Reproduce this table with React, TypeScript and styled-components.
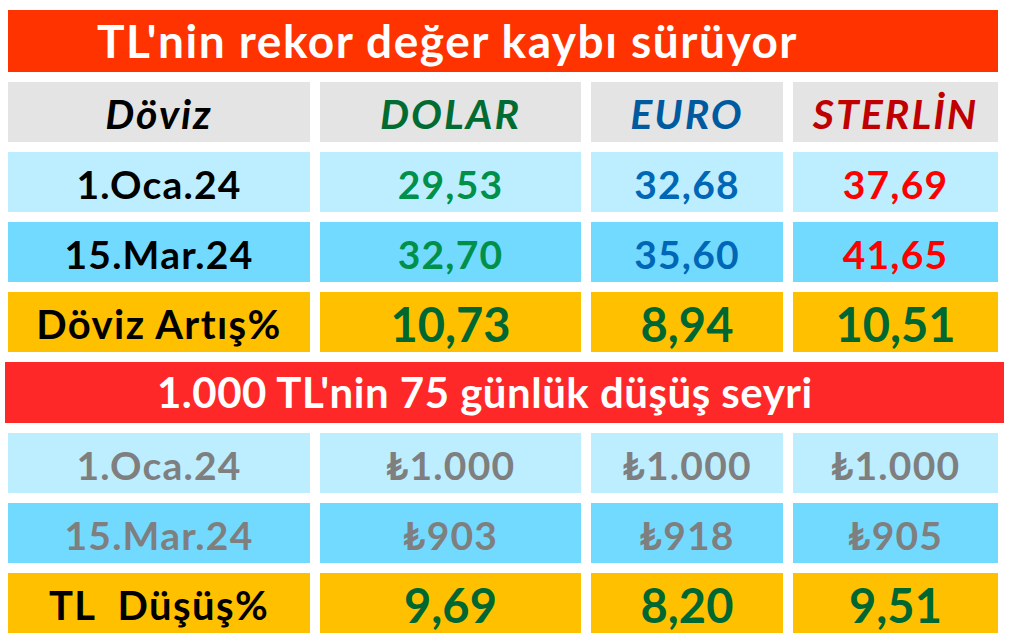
import styled, { createGlobalStyle } from 'styled-components'

const GlobalStyle = createGlobalStyle`
  html, body {
    margin: 0;
    padding: 0;
    background: #ffffff;
  }
  body {
    font-family: Lato, 'Open Sans', 'DejaVu Sans', sans-serif;
  }
`

type Tone = 'label' | 'green' | 'blue' | 'red' | 'dark' | 'gray'
type Fill = 'head' | 'light' | 'mid' | 'gold'

const toneColor: Record<Tone, string> = {
  label: '#000000',
  green: '#00904a',
  blue: '#0067b6',
  red: '#ff0000',
  dark: '#006732',
  gray: '#7f7f7f',
}

const fillColor: Record<Fill, string> = {
  head: '#e4e4e4',
  light: '#bdeeff',
  mid: '#73daff',
  gold: '#ffc000',
}

interface Row {
  fill: Fill
  big?: boolean
  cells: { text: string; tone: Tone }[]
}

const upper: Row[] = [
  {
    fill: 'light',
    cells: [
      { text: '1.Oca.24', tone: 'label' },
      { text: '29,53', tone: 'green' },
      { text: '32,68', tone: 'blue' },
      { text: '37,69', tone: 'red' },
    ],
  },
  {
    fill: 'mid',
    cells: [
      { text: '15.Mar.24', tone: 'label' },
      { text: '32,70', tone: 'green' },
      { text: '35,60', tone: 'blue' },
      { text: '41,65', tone: 'red' },
    ],
  },
  {
    fill: 'gold',
    big: true,
    cells: [
      { text: 'Döviz Artış%', tone: 'label' },
      { text: '10,73', tone: 'dark' },
      { text: '8,94', tone: 'dark' },
      { text: '10,51', tone: 'dark' },
    ],
  },
]

const lower: Row[] = [
  {
    fill: 'light',
    cells: [
      { text: '1.Oca.24', tone: 'gray' },
      { text: '₺1.000', tone: 'gray' },
      { text: '₺1.000', tone: 'gray' },
      { text: '₺1.000', tone: 'gray' },
    ],
  },
  {
    fill: 'mid',
    cells: [
      { text: '15.Mar.24', tone: 'gray' },
      { text: '₺903', tone: 'gray' },
      { text: '₺918', tone: 'gray' },
      { text: '₺905', tone: 'gray' },
    ],
  },
  {
    fill: 'gold',
    big: true,
    cells: [
      { text: 'TL\u00a0 Düşüş%', tone: 'label' },
      { text: '9,69', tone: 'dark' },
      { text: '8,20', tone: 'dark' },
      { text: '9,51', tone: 'dark' },
    ],
  },
]

const headers: { text: string; color: string }[] = [
  { text: 'Döviz', color: '#000000' },
  { text: 'DOLAR', color: '#006b33' },
  { text: 'EURO', color: '#005aa0' },
  { text: 'STERLİN', color: '#c00000' },
]

export default function App() {
  const renderRows = (rows: Row[]) =>
    rows.map((row, r) =>
      row.cells.map((c, i) => {
        const kind = row.big ? (i === 0 ? 'goldLabel' : 'goldValue') : 'plain'
        return (
          <Cell key={`${r}-${i}`} $fill={row.fill}>
            <Value $tone={c.tone} $kind={kind}>
              {c.text}
            </Value>
          </Cell>
        )
      })
    )

  return (
    <>
      <GlobalStyle />
      <Board>
        <Title>TL'nin rekor değer kaybı sürüyor</Title>
        {headers.map(h => (
          <Cell key={h.text} $fill="head">
            <Heading $color={h.color}>{h.text}</Heading>
          </Cell>
        ))}
        {renderRows(upper)}
        <SubTitle>1.000 TL'nin 75 günlük düşüş seyri</SubTitle>
        {renderRows(lower)}
      </Board>
    </>
  )
}

const Board = styled.div`
  display: grid;
  grid-template-columns: 302px 261px 192px 205px;
  grid-template-rows: 62px repeat(4, 60px) 61px repeat(3, 60px);
  column-gap: 10px;
  row-gap: 10px;
  padding: 10px 0 0 8px;
  width: max-content;
`

const Title = styled.div`
  grid-column: 1 / -1;
  background: #ff3300;
  color: #ffffff;
  font-weight: 700;
  font-size: 46px;
  letter-spacing: 1.5px;
  display: flex;
  align-items: center;
  padding-left: 89px;
  padding-bottom: 2px;
  white-space: nowrap;
`

const SubTitle = styled.div`
  grid-column: 1 / -1;
  margin: 0 -6px 0 -3px;
  background: #ff2828;
  color: #ffffff;
  font-weight: 700;
  font-size: 42px;
  letter-spacing: 0.5px;
  display: flex;
  align-items: center;
  padding-left: 152px;
  padding-bottom: 2px;
  white-space: nowrap;
`

const Cell = styled.div<{ $fill: Fill }>`
  background: ${p => fillColor[p.$fill]};
  display: flex;
  align-items: center;
  justify-content: center;
  overflow: hidden;
`

const Heading = styled.span<{ $color: string }>`
  color: ${p => p.$color};
  font-weight: 700;
  font-style: italic;
  font-size: 41px;
  letter-spacing: 2px;
  white-space: nowrap;
  padding-top: 3px;
`

const sizes = {
  plain: { size: 39, spacing: 1.2 },
  goldLabel: { size: 40, spacing: 1.4 },
  goldValue: { size: 47, spacing: 0 },
}

const Value = styled.span<{ $tone: Tone; $kind: keyof typeof sizes }>`
  color: ${p => toneColor[p.$tone]};
  font-weight: 700;
  font-size: ${p => sizes[p.$kind].size}px;
  letter-spacing: ${p => sizes[p.$kind].spacing}px;
  white-space: nowrap;
  padding-top: 3px;
`
